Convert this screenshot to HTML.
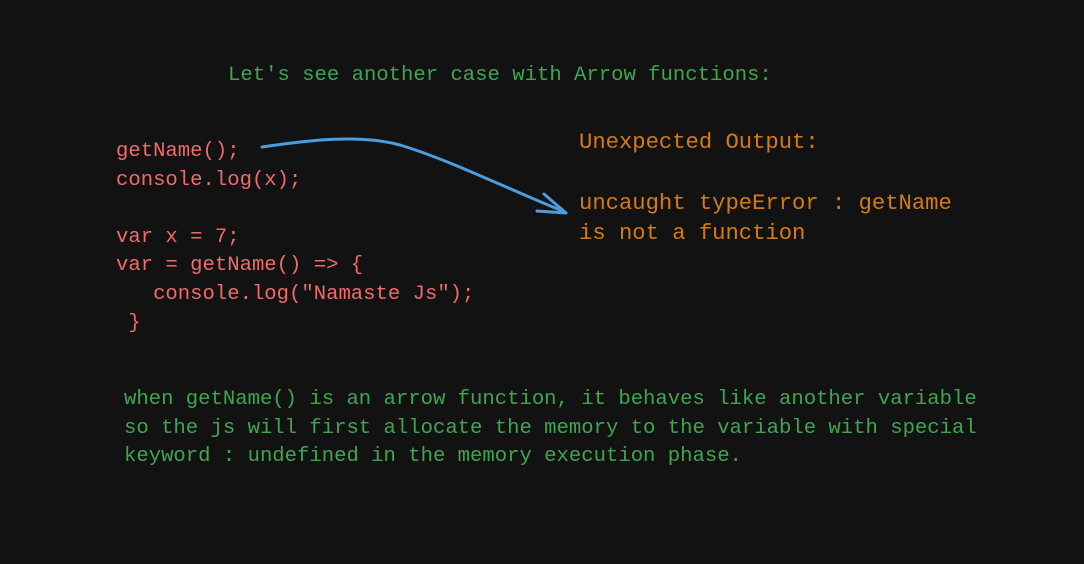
<!DOCTYPE html>
<html><head><style>
html,body{margin:0;padding:0;background:#121212;}
body{width:1084px;height:564px;position:relative;overflow:hidden;font-family:"Liberation Mono",monospace;font-size:20.6px;}
.t{position:absolute;white-space:pre;line-height:28.6px;}
.g{color:#3fa64f;}
.r{color:#f06a6a;}
.o{color:#d57b16;font-size:22.2px;}
</style></head><body>
<div class="t g" style="left:228px;top:62px;">Let's see another case with Arrow functions:</div>
<div class="t r" style="left:116px;top:138px;">getName();
console.log(x);

var x = 7;
var = getName() =&gt; {
   console.log("Namaste Js");
 }</div>
<div class="t o" style="left:579px;top:128px;line-height:30px;">Unexpected Output:</div>
<div class="t o" style="left:579px;top:189px;line-height:29.5px;">uncaught typeError : getName
is not a function</div>
<div class="t g" style="left:124px;top:386px;">when getName() is an arrow function, it behaves like another variable
so the js will first allocate the memory to the variable with special
keyword : undefined in the memory execution phase.</div>
<svg style="position:absolute;left:0;top:0" width="1084" height="564">
<path d="M262 147 C 310 140, 360 134, 400 145 C 450 160, 510 190, 565 212" fill="none" stroke="#4a9ee0" stroke-width="3" stroke-linecap="round"/>
<path d="M544 194 L566 213 L537 211" fill="none" stroke="#4a9ee0" stroke-width="3" stroke-linecap="round" stroke-linejoin="round"/>
</svg>
</body></html>
